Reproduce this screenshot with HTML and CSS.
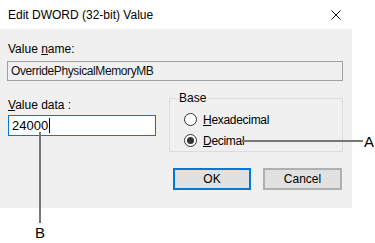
FILE: index.html
```html
<!DOCTYPE html>
<html lang="en">
<head>
  <meta charset="UTF-8" />
  <title>Edit DWORD (32-bit) Value</title>
  <link rel="stylesheet" href="styles.css">
</head>
<body>

  <div class="window">
    <div class="titlebar">
      <span class="title">Edit DWORD (32-bit) Value</span>
      <svg class="close" width="10" height="10" viewBox="0 0 10 10">
        <path d="M0.5 0.5 L9.5 9.5 M9.5 0.5 L0.5 9.5" stroke="#111" stroke-width="1" fill="none"/>
      </svg>
    </div>

    <div class="dialog">
      <div class="label">Value <u>n</u>ame:</div>
      <div class="name-box">OverridePhysicalMemoryMB</div>

      <div class="middle">
        <div class="data-col">
          <div class="label"><u>V</u>alue data :</div>
          <div class="data-box"><span class="caret">24000</span></div>
        </div>

        <fieldset class="base">
          <legend>Base</legend>
          <div class="radio-row">
            <span class="radio"></span>
            <span class="opt"><u>H</u>exadecimal</span>
          </div>
          <div class="radio-row">
            <span class="radio checked"></span>
            <span class="opt"><u>D</u>ecimal</span>
          </div>
        </fieldset>
      </div>

      <div class="buttons">
        <button class="btn default">OK</button>
        <button class="btn">Cancel</button>
      </div>
    </div>
  </div>

  <!-- callouts -->
  <div class="callout-a"></div>
  <span class="letter letter-a">A</span>
  <div class="callout-b"></div>
  <span class="letter letter-b">B</span>

</body>
</html>
```

FILE: styles.css
```css
* { box-sizing: border-box; margin: 0; padding: 0; }

body {
  font-family: "Liberation Sans", Arial, sans-serif;
  font-size: 12px;
  color: #000;
  background: #fff;
  width: 375px;
  height: 243px;
  position: relative;
  overflow: hidden;
}

.window {
  width: 352px;
}

.titlebar {
  height: 29px;
  display: flex;
  align-items: center;
  justify-content: space-between;
  padding: 0 11px 0 8px;
  background: #fff;
}

.title {
  font-size: 12px;
}

.dialog {
  background: #f0f0f0;
  height: 179px;
  padding: 13px 9px 0 7px;
}

.label {
  line-height: 14px;
  height: 14px;
  padding-left: 1px;
}

.name-box {
  margin-top: 5px;
  height: 20px;
  border: 1px solid #a0a0a0;
  background: #f0f0f0;
  line-height: 18px;
  padding-left: 3px;
  color: #111;
  letter-spacing: -0.4px;
}

.middle {
  display: flex;
  justify-content: space-between;
  margin-top: 10px;
}

.data-col {
  padding-left: 1px;
  padding-top: 7px;
  width: 150px;
}

.data-col .label {
  padding-left: 0;
}

.data-box {
  margin-top: 3px;
  width: 148px;
  height: 21px;
  border: 1px solid #0078d7;
  background: #fff;
  line-height: 19px;
  padding-left: 3px;
  font-size: 13px;
}

.caret {
  border-right: 1px solid #000;
  padding-right: 1px;
}

.base {
  width: 174px;
  height: 59px;
  margin-top: 2px;
  border: 1px solid #dcdcdc;
  padding: 6px 0 0 14px;
}

.base legend {
  margin-left: -7px;
  padding: 0 2px;
  line-height: 10px;
}

.radio-row {
  display: flex;
  align-items: center;
  gap: 6px;
  height: 21px;
}

.opt {
  letter-spacing: -0.3px;
}

.radio {
  width: 13px;
  height: 13px;
  border: 1px solid #333;
  border-radius: 50%;
  background: #fff;
  display: flex;
  align-items: center;
  justify-content: center;
}

.radio.checked::after {
  content: "";
  width: 7px;
  height: 7px;
  border-radius: 50%;
  background: #333;
}

.buttons {
  display: flex;
  justify-content: flex-end;
  gap: 12px;
  margin-top: 16px;
  padding-right: 1px;
}

.btn {
  width: 79px;
  height: 22px;
  font-family: inherit;
  font-size: 12px;
  background: #e1e1e1;
  border: 2px solid #b0b0b0;
  color: #000;
}

.btn.default {
  width: 78px;
  border-color: #0078d7;
}

/* callouts */
.callout-a {
  position: absolute;
  left: 242px;
  top: 140px;
  width: 121px;
  height: 2px;
  background: #777;
}

.callout-b {
  position: absolute;
  left: 39px;
  top: 132px;
  width: 2px;
  height: 91px;
  background: #777;
}

.letter {
  position: absolute;
  font-size: 15px;
  line-height: 15px;
}

.letter-a {
  left: 364px;
  top: 134px;
}

.letter-b {
  left: 35px;
  top: 225px;
}
```
